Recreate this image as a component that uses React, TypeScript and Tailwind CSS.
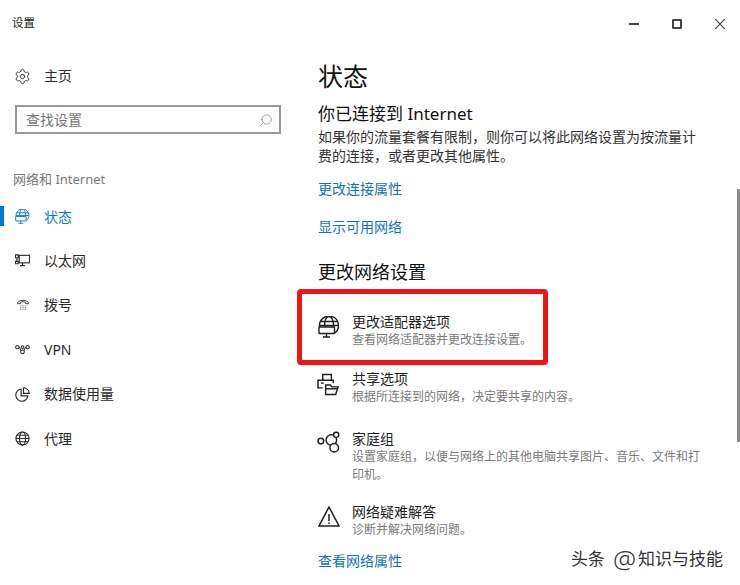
import type { ReactNode } from "react"
import { Settings, Search } from "lucide-react"

const FONT = "font-['Noto_Sans','Noto_Sans_CJK_SC',sans-serif]"

function GlobeMonitor({ className }: { className?: string }) {
  return (
    <svg viewBox="0 0 22 22" className={className} fill="none" stroke="currentColor" strokeWidth="1.400">
      <path d="M1.600 11A9.500 9.500 0 1 1 17 16.900" />
      <path d="M7 11C6 5 8 .5 11 .5S16 5 15.500 11M2.500 5.500h17M1.500 9.500h19" />
      <rect x="1" y="11" width="15.500" height="6.500" rx=".5" fill="white" />
      <path d="M8.500 17.500v3M5 21h7" />
    </svg>
  )
}

function EthernetIcon({ className }: { className?: string }) {
  return (
    <svg viewBox="0 0 16 16" className={className} fill="none" stroke="currentColor" strokeWidth="1.200">
      <rect x="4.500" y="2.500" width="11" height="8" />
      <path d="M8 10.500v3M5.500 13.500h5M.5 2h3v3h-3zM2 5v4M.5 9h3v2.500h-3z" />
    </svg>
  )
}

function DialIcon({ className }: { className?: string }) {
  return (
    <svg viewBox="0 0 16 16" className={className} fill="none" stroke="currentColor" strokeWidth="1">
      <path d="M1.500 6.500C1.500 1.500 14.500 1.500 14.500 6.500H11V5C9 4 7 4 5 5v1.500z" />
      <path d="M5 9h1M7.500 9h1M10 9h1M5 11h1M7.500 11h1M10 11h1M5 13h1M7.500 13h1M10 13h1" />
    </svg>
  )
}

function VpnIcon({ className }: { className?: string }) {
  return (
    <svg viewBox="0 0 16 16" className={className} fill="none" stroke="currentColor" strokeWidth="1.100">
      <circle cx="2.500" cy="5.500" r="1.800" />
      <circle cx="13.500" cy="5.500" r="1.800" />
      <circle cx="8" cy="10.500" r="2" />
      <path d="M4.300 5.500c1.500 0 1.500 3.500 2.200 3.700M11.700 5.500c-1.500 0-1.500 3.500-2.200 3.700" />
      <circle cx="8" cy="5.500" r="1.400" />
    </svg>
  )
}

function UsageIcon({ className }: { className?: string }) {
  return (
    <svg viewBox="0 0 16 16" className={className} fill="none" stroke="currentColor" strokeWidth="1.200">
      <path d="M6.500 2.200a6.500 6.500 0 1 0 7.300 7.300H6.500z" />
      <path d="M9 .8v6h6.200A6.500 6.500 0 0 0 9 .8z" />
    </svg>
  )
}

function GlobeIcon({ className }: { className?: string }) {
  return (
    <svg viewBox="0 0 16 16" className={className} fill="none" stroke="currentColor" strokeWidth="1.200">
      <circle cx="8" cy="8" r="7" />
      <ellipse cx="8" cy="8" rx="3.200" ry="7" />
      <path d="M1 8h14M2 4.500h12M2 11.500h12" />
    </svg>
  )
}

function ShareIcon({ className }: { className?: string }) {
  return (
    <svg viewBox="0 0 24 23" className={className} fill="none" stroke="currentColor" strokeWidth="1.500">
      <path d="M6 7V1h9v6M6 15H1V7h16v3" />
      <path d="M4 10h3" />
      <path d="M9 12h5l1.500 2H22l-2.500 8H9z" fill="white" />
      <path d="M9 16h13" />
    </svg>
  )
}

function HomegroupIcon({ className }: { className?: string }) {
  return (
    <svg viewBox="0 0 24 22" className={className} fill="none" stroke="currentColor" strokeWidth="1.500">
      <circle cx="4" cy="10" r="3" />
      <circle cx="15" cy="9" r="5.500" />
      <circle cx="20" cy="3.500" r="2.700" fill="white" />
      <circle cx="18" cy="17" r="4.500" fill="white" />
    </svg>
  )
}

function WarningIcon({ className }: { className?: string }) {
  return (
    <svg viewBox="0 0 22 21" className={className} fill="none" stroke="currentColor" strokeWidth="1.500">
      <path d="M11 1 1 20h20z" />
      <path d="M11 8v7M11 16.500V18" />
    </svg>
  )
}

function NavItem({ icon, label, active }: { icon: ReactNode; label: string; active?: boolean }) {
  return (
    <div className={`relative flex h-[44.4px] items-center gap-[14px] pl-[15px] text-sm ${active ? "text-[#0f78d4]" : "text-[#2a2a2a]"}`}>
      {active && <span className="absolute left-0 top-[12px] h-[20px] w-[4px] bg-[#0078d7]" />}
      <span className="flex w-[15px] justify-center">{icon}</span>
      {label}
    </div>
  )
}

function SettingRow({
  icon,
  title,
  desc,
  className,
}: {
  icon: ReactNode
  title: string
  desc: string
  className?: string
}) {
  return (
    <div className={`flex gap-[12px] ${className ?? ""}`}>
      <span className="flex w-[23px] shrink-0 justify-center text-[#1f1f1f]">{icon}</span>
      <div className="w-[352px]">
        <p className="text-sm leading-[19px] text-[#1f1f1f]">{title}</p>
        <p className="text-xs leading-[18px] text-[#7a7a7a]">{desc}</p>
      </div>
    </div>
  )
}

export default function App() {
  return (
    <div className={`relative h-[585px] w-[740px] overflow-hidden bg-white ${FONT}`}>
      <header className="flex h-[46px] items-center justify-between pl-[12px]">
        <span className="text-[11.5px] text-[#222]">设置</span>
        <div className="flex items-center gap-[33px] pr-[15px] pt-[2px] text-[#444]">
          <span className="h-[1.500px] w-[10px] bg-[#444]" />
          <span className="h-[10px] w-[10px] rounded-[1px] border-2 border-[#444]" />
          <svg viewBox="0 0 10 10" className="h-[10px] w-[10px]" fill="none" stroke="currentColor" strokeWidth="1.200">
            <path d="M0 0l10 10M10 0 0 10" />
          </svg>
        </div>
      </header>

      <div className="flex">
        <aside className="w-[319px] shrink-0">
          <div className="pt-[8px]">
            <NavItem icon={<Settings className="h-[17px] w-[17px] shrink-0" strokeWidth={1.300} />} label="主页" />
          </div>
          <div className="ml-[15px] mt-[7px] flex h-[29px] w-[266px] items-center justify-between border-2 border-[#999] pl-[9px] pr-[6px] text-sm text-[#777]">
            查找设置
            <Search className="h-[14px] w-[14px] -scale-x-100" strokeWidth={1.200} />
          </div>
          <p className="ml-[13px] mt-[35px] text-[13px] leading-[20px] text-[#777]">网络和 Internet</p>
          <div className="mt-[5px]">
            <NavItem active icon={<GlobeMonitor className="h-[15px] w-[15px] shrink-0" />} label="状态" />
            <NavItem icon={<EthernetIcon className="h-[15px] w-[15px] shrink-0" />} label="以太网" />
            <NavItem icon={<DialIcon className="h-[14px] w-[14px] shrink-0" />} label="拨号" />
            <NavItem icon={<VpnIcon className="h-[15px] w-[15px] shrink-0" />} label="VPN" />
            <NavItem icon={<UsageIcon className="h-[15px] w-[15px] shrink-0" />} label="数据使用量" />
            <NavItem icon={<GlobeIcon className="h-[15px] w-[15px] shrink-0" />} label="代理" />
          </div>
        </aside>

        <main className="-ml-[1px] min-w-0 flex-1 pt-[12px]">
          <h1 className="text-[25px] leading-[36px] text-[#111]">状态</h1>
          <h2 className="mt-[7px] text-[17px] leading-[26px] text-[#111]">你已连接到 Internet</h2>
          <p className="w-[380px] text-sm leading-[19px] text-[#333]">
            如果你的流量套餐有限制，则你可以将此网络设置为按流量计费的连接，或者更改其他属性。
          </p>
          <p className="mt-[14px] text-sm leading-[20px] text-[#0f72c4]">更改连接属性</p>
          <p className="mt-[18px] text-sm leading-[20px] text-[#0f72c4]">显示可用网络</p>
          <h2 className="mt-[22px] text-[18px] leading-[26px] text-[#111]">更改网络设置</h2>
          <div className="-ml-[1px] mt-[27px]">
            <SettingRow icon={<GlobeMonitor className="mt-[4px] h-[22px] w-[22px]" />} title="更改适配器选项" desc="查看网络适配器并更改连接设置。" />
            <SettingRow className="mt-[20px]" icon={<ShareIcon className="mt-[4px] h-[23px] w-[23px]" />} title="共享选项" desc="根据所连接到的网络，决定要共享的内容。" />
            <SettingRow className="mt-[23px]" icon={<HomegroupIcon className="mt-[2px] h-[22px] w-[23px]" />} title="家庭组" desc="设置家庭组，以便与网络上的其他电脑共享图片、音乐、文件和打印机。" />
            <SettingRow className="mt-[18px]" icon={<WarningIcon className="mt-[4px] h-[21px] w-[22px]" />} title="网络疑难解答" desc="诊断并解决网络问题。" />
          </div>
          <p className="mt-[12px] text-sm leading-[20px] text-[#0f72c4]">查看网络属性</p>
        </main>
      </div>

      {/* red highlight drawn over the screenshot */}
      <div className="absolute left-[297px] top-[289px] h-[76px] w-[251px] rounded-[4px] border-[5px] border-[#f01414]" />
      <div className="absolute right-0 top-[189px] h-[253px] w-[3px] bg-[#8a8a8a]" />
      <div className="absolute right-[17px] top-[548px] flex items-center text-[17px] leading-[22px] text-[#333]">
        <span className="mr-[8px]">头条</span>
        <span className="mr-[2px] text-[26px] font-light">@</span>
        知识与技能
      </div>
    </div>
  )
}
